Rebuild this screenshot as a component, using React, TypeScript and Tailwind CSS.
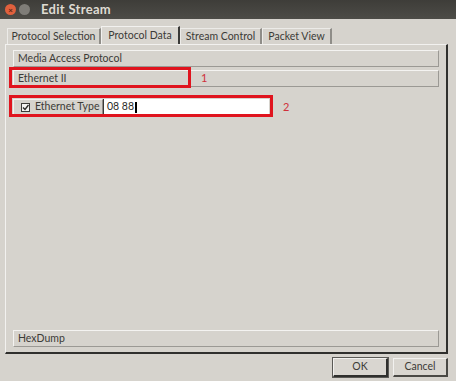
const font = "font-['Lato','Noto_Sans',sans-serif]";

function Tab({ label, w, active }: { label: string; w: string; active?: boolean }) {
  return (
    <div
      className={`${w} shrink-0 whitespace-nowrap flex items-center justify-center text-[10.5px] text-[#3c3b37] ${
        active
          ? "h-[18px] border-t border-l border-[#f2f1ef] border-r-2 border-r-[#3a3a38] bg-[#d9d6d0]"
          : "h-[16px] border-t border-l border-[#ecebe8] border-r-2 border-r-[#8f8d88] bg-[#d6d3cd]"
      }`}
    >
      {label}
    </div>
  );
}

function Section({ label }: { label: string }) {
  return (
    <div className="h-[17px] flex items-center pl-[4px] whitespace-nowrap text-[10.5px] text-[#3c3b37] border-t border-l border-[#f4f3f1] border-r border-b border-r-[#9b9994] border-b-[#9b9994] bg-[#d6d3cd]">
      {label}
    </div>
  );
}

export default function App() {
  return (
    <div className={`w-[456px] h-[381px] bg-[#d6d3cd] flex flex-col ${font}`}>
      {/* title bar */}
      <div className="h-[19px] flex items-center pl-[5px] bg-gradient-to-b from-[#3e3d39] to-[#4d4c47]">
        <div className="w-[11px] h-[11px] rounded-full bg-[#e0603d] flex items-center justify-center text-[8px] leading-none text-[#5a2314] font-bold">
          ×
        </div>
        <div className="w-[11px] h-[11px] rounded-full bg-[#7f7d78] ml-[3px]" />
        <div className="ml-[11px] text-[13px] font-bold text-[#dfdbd2] tracking-[0.3px]">Edit Stream</div>
      </div>

      {/* tabs */}
      <div className="flex items-end mt-[7px] ml-[7px] h-[18px]">
        <Tab label="Protocol Selection" w="w-[94px]" />
        <Tab label="Protocol Data" w="w-[79px]" active />
        <Tab label="Stream Control" w="w-[82px]" />
        <Tab label="Packet View" w="w-[70px]" />
      </div>

      {/* pane */}
      <div className="ml-[5px] w-[443px] h-[310px] border-t border-l border-[#f2f1ef] border-r-2 border-b-2 border-r-[#2f2f2d] border-b-[#2f2f2d] flex flex-col px-[7px] pt-[5px] pb-[5px]">
        <Section label="Media Access Protocol" />
        <div className="relative mt-[3px]">
          <Section label="Ethernet II" />
          <div className="absolute left-[-4px] top-[-3px] w-[182px] h-[21px] border-[3px] border-[#e0141e]" />
          <div className="absolute left-[188px] top-[0px] text-[11px] text-[#d0303a]">1</div>
        </div>

        <div className="relative mt-[12px] h-[16px] flex items-center">
          <div className="w-[90px] shrink-0 whitespace-nowrap h-[16px] flex items-center pl-[7px] bg-[#d6d3cd] border-t border-l border-[#f2f1ef] border-r border-b border-r-[#8f8d88] border-b-[#8f8d88]">
            <div className="w-[9px] h-[9px] border border-[#3c3b37] bg-[#f4f3f1] flex items-center justify-center">
              <svg width="7" height="7" viewBox="0 0 7 7">
                <path d="M1 3.5 L3 5.5 L6.5 1" stroke="#2c2b28" strokeWidth="1.4" fill="none" />
              </svg>
            </div>
            <span className="ml-[5px] text-[10.5px] text-[#3c3b37]">Ethernet Type</span>
          </div>
          <div className="w-[166px] shrink-0 h-[16px] bg-white border-l border-[#3c3b37] flex items-center pl-[3px] text-[10.5px] text-[#2c2b28]">
            08 88
            <span className="w-[2px] h-[11px] bg-black ml-[1px]" />
          </div>
          <div className="absolute left-[-4px] top-[-4px] w-[264px] h-[22px] border-[3px] border-[#e0141e]" />
          <div className="absolute left-[270px] top-[0px] text-[11px] text-[#d0303a]">2</div>
        </div>

        <div className="flex-1" />
        <Section label="HexDump" />
      </div>

      {/* buttons */}
      <div className="flex justify-end gap-[5px] pr-[8px] mt-[4px]">
        <button className="w-[55px] h-[19px] text-[10.5px] text-[#3c3b37] bg-[#d9d6d0] border-t border-l border-[#f2f1ef] border-r-2 border-b-2 border-r-[#2f2f2d] border-b-[#2f2f2d] outline outline-1 outline-[#5a5955]">
          OK
        </button>
        <button className="w-[55px] h-[19px] text-[10.5px] text-[#3c3b37] bg-[#d9d6d0] border-t border-l border-[#f2f1ef] border-r-2 border-b-2 border-r-[#4a4945] border-b-[#4a4945]">
          Cancel
        </button>
      </div>
    </div>
  );
}
